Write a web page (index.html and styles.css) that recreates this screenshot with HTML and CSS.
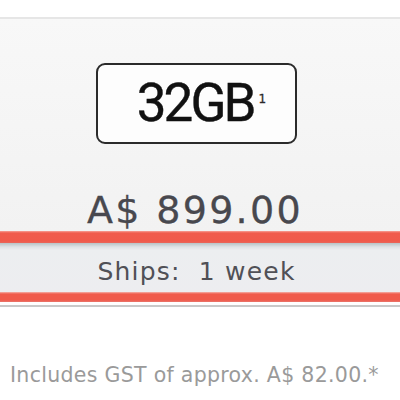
FILE: index.html
```html
<!DOCTYPE html>
<html>
<head>
<meta charset="utf-8">
<link rel="stylesheet" href="styles.css">
</head>
<body>
<div class="top-space"></div>
<section class="panel">
  <div class="capacity"><span class="cap-text">32GB</span><sup class="fn">1</sup></div>
  <div class="price">A$ 899.00</div>
</section>
<div class="red-bar"></div>
<div class="ships"><span>Ships:&nbsp; 1 week</span></div>
<div class="red-bar red-bar-2"></div>
<div class="rule"></div>
<p class="gst">Includes GST of approx. A$ 82.00.*</p>
</body>
</html>
```
FILE: styles.css
```css
html, body {
  margin: 0;
  padding: 0;
  background: #ffffff;
  width: 400px;
  height: 400px;
  overflow: hidden;
}
body {
  font-family: "DejaVu Sans", "Liberation Sans", sans-serif;
}
.top-space {
  height: 17px;
}
.panel {
  border-top: 2px solid #e6e6e6;
  background: linear-gradient(#f8f8f8, #f2f2f2);
  height: 212px;
  display: flex;
  flex-direction: column;
  align-items: center;
}
.capacity {
  margin-top: 44px;
  margin-left: -7px;
  width: 197px;
  height: 77px;
  border: 2px solid #2b2b2b;
  border-radius: 9px;
  background: #fdfdfd;
  display: flex;
  justify-content: center;
  align-items: flex-start;
  box-sizing: content-box;
}
.cap-text {
  font-family: Roboto, "DejaVu Sans", sans-serif;
  font-size: 53px;
  line-height: 77px;
  color: #111111;
  letter-spacing: -3px;
  margin-left: 10px;
  -webkit-text-stroke: 0.4px #111111;
}
.fn {
  font-family: "DejaVu Sans", sans-serif;
  font-size: 12px;
  line-height: 1;
  color: #2a2a2a;
  margin-top: 28px;
  margin-left: 5px;
  vertical-align: baseline;
  -webkit-text-stroke: 0.3px #2a2a2a;
}
.price {
  margin-top: 45px;
  margin-left: -10px;
  font-size: 38px;
  line-height: 42px;
  color: #48484e;
  letter-spacing: 2.3px;
  -webkit-text-stroke: 0.3px #48484e;
}
.red-bar {
  height: 12px;
  background: linear-gradient(#f7a096 0, #f05b4c 2px, #f05a4b 10px, #e8665b 12px);
}
.red-bar-2 {
  height: 10px;
  background: linear-gradient(#f3b3aa 0, #f05a4b 2px, #f05a4b 8px, #e9766c 10px);
}
.ships {
  height: 49px;
  background: linear-gradient(#b8c3c6 0, #dfe3e6 4px, #eceef0 7px, #ededf0 100%);
  display: flex;
  justify-content: center;
  align-items: flex-end;
  box-sizing: border-box;
  padding-bottom: 5px;
}
.ships span {
  font-size: 25px;
  line-height: 30px;
  color: #505056;
  letter-spacing: 1.2px;
  margin-left: -7px;
}
.rule {
  height: 2px;
  margin-top: 3px;
  background: #c9c9c9;
}
.gst {
  margin: 56px 0 0 10px;
  font-size: 20.5px;
  line-height: 24px;
  color: #9a9a9a;
  letter-spacing: 0.3px;
  white-space: nowrap;
}
```
